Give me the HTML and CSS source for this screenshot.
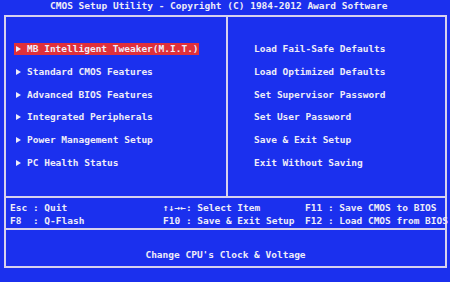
FILE: index.html
```html
<!DOCTYPE html>
<html lang="en">
<head>
    <meta charset="UTF-8">
    <meta name="viewport" content="width=device-width, initial-scale=1.0">
    <title>CMOS Setup Utility</title>
    <link rel="stylesheet" href="styles.css">
</head>
<body>
    <div class="title">CMOS Setup Utility - Copyright (C) 1984-2012 Award Software</div>
    <div class="frame">
        <div class="menu">
            <div class="col left">
                <div class="item active"><svg class="arrow" viewBox="0 0 5 6"><polygon points="0,0 5,3 0,6"/></svg><span>MB Intelligent Tweaker(M.I.T.)</span></div>
                <div class="item"><svg class="arrow" viewBox="0 0 5 6"><polygon points="0,0 5,3 0,6"/></svg><span>Standard CMOS Features</span></div>
                <div class="item"><svg class="arrow" viewBox="0 0 5 6"><polygon points="0,0 5,3 0,6"/></svg><span>Advanced BIOS Features</span></div>
                <div class="item"><svg class="arrow" viewBox="0 0 5 6"><polygon points="0,0 5,3 0,6"/></svg><span>Integrated Peripherals</span></div>
                <div class="item"><svg class="arrow" viewBox="0 0 5 6"><polygon points="0,0 5,3 0,6"/></svg><span>Power Management Setup</span></div>
                <div class="item"><svg class="arrow" viewBox="0 0 5 6"><polygon points="0,0 5,3 0,6"/></svg><span>PC Health Status</span></div>
            </div>
            <div class="col right">
                <div class="item">Load Fail-Safe Defaults</div>
                <div class="item">Load Optimized Defaults</div>
                <div class="item">Set Supervisor Password</div>
                <div class="item">Set User Password</div>
                <div class="item">Save &amp; Exit Setup</div>
                <div class="item">Exit Without Saving</div>
            </div>
        </div>
        <div class="keys">
            <div class="key">Esc : Quit</div>
            <div class="key">↑↓→←: Select Item</div>
            <div class="key">F11 : Save CMOS to BIOS</div>
            <div class="key">F8  : Q-Flash</div>
            <div class="key">F10 : Save &amp; Exit Setup</div>
            <div class="key">F12 : Load CMOS from BIOS</div>
        </div>
        <div class="help">Change CPU's Clock &amp; Voltage</div>
    </div>
</body>
</html>
```

FILE: styles.css
```css
body {
    margin: 0;
    width: 450px;
    height: 282px;
    background-color: #1b30ee;
    color: #eeecf8;
    font-family: "DejaVu Sans Mono", "Liberation Mono", monospace;
    font-weight: bold;
    font-size: 9.5px;
    overflow: hidden;
}

.title {
    height: 15px;
    line-height: 12px;
    padding-left: 50px;
    white-space: pre;
}

/* outer frame */
.frame {
    margin: 0 3px 0 4px;
    border: 2px solid #d6d2ee;
}

.menu {
    display: grid;
    grid-template-columns: 222px 1fr;
    height: 179px;
}

.col {
    padding-top: 26px;
}

.left {
    padding-left: 8px;
    border-right: 2px solid #d6d2ee;
}

.right {
    padding-left: 26px;
}

.item {
    height: 22.8px;
    line-height: 12px;
    display: flex;
    align-items: flex-start;
    white-space: pre;
}

.left .item {
    width: fit-content;
    padding-left: 2px;
}

.left .item span {
    height: 12px;
}

/* selected entry */
.item.active {
    height: 12px;
    margin-bottom: 10.8px;
    background-color: #e0303a;
}

.arrow {
    width: 5px;
    height: 6px;
    margin: 3px 6px 0 0;
    fill: #eeecf8;
}

.keys {
    border-top: 2px solid #d6d2ee;
    height: 32px;
    box-sizing: border-box;
    padding: 4px 0 0 4px;
    display: grid;
    grid-template-columns: 153px 142px 1fr;
    line-height: 12px;
    white-space: pre;
}

.help {
    border-top: 2px solid #d6d2ee;
    height: 38px;
    box-sizing: border-box;
    padding-top: 19px;
    line-height: 12px;
    text-align: center;
    white-space: pre;
}
```
